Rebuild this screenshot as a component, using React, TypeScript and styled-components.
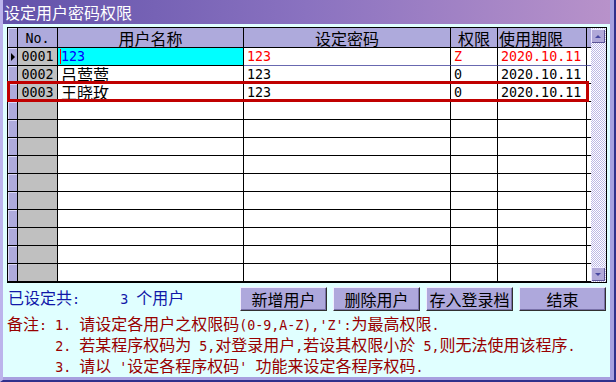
import React from "react";
import styled, { createGlobalStyle } from "styled-components";

const GlobalStyle = createGlobalStyle`
  html, body {
    margin: 0;
    padding: 0;
    background: #e0ffff;
  }
  body {
    font-family: "Noto Sans CJK SC", "Noto Sans", sans-serif;
  }
`;

const Frame = styled.div`
  width: 616px;
  height: 382px;
  box-sizing: border-box;
  border-left: 3px solid #bcb4ec;
  border-right: 2px solid #30308c;
  border-bottom: 2px solid #30308c;
  background: #e0ffff;
`;

const Body = styled.div`
  height: 100%;
  box-sizing: border-box;
  border-right: 4px solid #a8a0e0;
  border-bottom: 3px solid #a8a0e0;
  display: flex;
  flex-direction: column;
`;

const TitleBar = styled.div`
  height: 24px;
  flex: none;
  background: linear-gradient(to right, #6252aa 0%, #8a72c0 50%, #b892ca 100%);
  color: #fff;
  font-size: 16px;
  line-height: 24px;
  padding-left: 1px;
`;

const Grid = styled.div`
  position: relative;
  margin: 3px 3px 0 4px;
  width: 600px;
  height: 256px;
  box-sizing: border-box;
  border: 1px solid #000;
  display: flex;
  flex: none;
`;

const Table = styled.div`
  width: 583px;
  display: flex;
  flex-direction: column;
  background: #fff;
`;

const Row = styled.div<{ $h: number }>`
  display: grid;
  grid-template-columns: 10px 40px 186px 207px 47px 89px 4px;
  height: ${(p) => p.$h}px;
`;

const Cell = styled.div<{ $bg?: string; $color?: string; $center?: boolean; $line?: string }>`
  box-sizing: border-box;
  border-right: 1px solid #000;
  border-bottom: 1px solid ${(p) => p.$line || "#000"};
  background: ${(p) => p.$bg || "#fff"};
  color: ${(p) => p.$color || "#000"};
  display: flex;
  align-items: center;
  justify-content: ${(p) => (p.$center ? "center" : "flex-start")};
  padding-left: ${(p) => (p.$center ? 0 : 3)}px;
  white-space: pre;
  font-size: 16px;
  line-height: 17px;
`;

const HeadCell = styled(Cell)`
  background: #aeaadc;
  padding-top: 1px;
`;

const Indicator = styled(Cell)`
  background: #aeaadc;
  box-shadow: inset 1px 1px 0 #dcd8f8;
  justify-content: center;
  padding-left: 1px;
`;

const Filler = styled(Cell)`
  border-right: none;
`;

const Pointer = styled.span`
  width: 0;
  height: 0;
  border-left: 4px solid #000;
  border-top: 4px solid transparent;
  border-bottom: 4px solid transparent;
`;

const Caret = styled.span`
  display: flex;
  align-items: center;
  height: 15px;
  border-left: 1px solid #ff0000;
  margin-left: -1px;
`;

const Scroll = styled.div`
  width: 15px;
  box-sizing: border-box;
  padding: 1px 0;
  display: flex;
  flex-direction: column;
  justify-content: space-between;
  background: repeating-conic-gradient(#bcb8e6 0 25%, #ffffff 0 50%) 0 0 / 2px 2px;
`;

const ScrollBtn = styled.div`
  width: 14px;
  height: 14px;
  background: #b0a8d8;
  box-shadow: inset 1px 1px 0 #ece8ff, inset -1px -1px 0 #5c5498;
  display: flex;
  align-items: center;
  justify-content: center;
`;

const Arrow = styled.span<{ $up?: boolean }>`
  width: 0;
  height: 0;
  border-left: 3px solid transparent;
  border-right: 3px solid transparent;
  ${(p) => (p.$up ? "border-bottom" : "border-top")}: 3px solid #4848a0;
`;

const Highlight = styled.div`
  position: absolute;
  left: -1px;
  top: 53px;
  width: 582px;
  height: 21px;
  box-sizing: border-box;
  border: 3px solid #c00000;
  pointer-events: none;
`;

const ActionRow = styled.div`
  display: flex;
  align-items: flex-start;
  margin: 4px 4px 0 5px;
  height: 24px;
  flex: none;
`;

const Summary = styled.div`
  color: #1018a8;
  font-size: 16px;
  line-height: 20px;
  white-space: pre;
`;

const Buttons = styled.div`
  display: flex;
  gap: 6px;
  margin-left: auto;
`;

const Button = styled.button`
  width: 87px;
  height: 24px;
  padding: 0;
  box-sizing: border-box;
  background: #aea8dc;
  border: 1px solid;
  border-color: #f0eeff #303030 #303030 #f0eeff;
  box-shadow: inset -1px -1px 0 #7870a8;
  font-family: "Noto Sans CJK SC", sans-serif;
  font-size: 16px;
  line-height: 20px;
  color: #000;
`;

const Notes = styled.div`
  margin: 2px 0 0 4px;
  color: #980000;
  font-size: 16px;
`;

const NoteLine = styled.div`
  height: 21px;
  line-height: 21px;
  white-space: pre;
`;

const Half = styled.span`
  font-family: "DejaVu Sans Mono", "Liberation Mono", monospace;
  font-size: 13.33px;
`;

const Mixed: React.FC<{ text: string }> = ({ text }) => (
  <>
    {text.split(/([\x20-\x7e]+)/).map((part, i) =>
      /^[\x20-\x7e]+$/.test(part) ? <Half key={i}>{part}</Half> : part ? <span key={i}>{part}</span> : null
    )}
  </>
);

interface User {
  no: string;
  name: string;
  pw: string;
  perm: string;
  date: string;
}

const users: User[] = [
  { no: "0001", name: "123", pw: "123", perm: "Z", date: "2020.10.11" },
  { no: "0002", name: "吕莺莺", pw: "123", perm: "0", date: "2020.10.11" },
  { no: "0003", name: "王晓玫", pw: "123", perm: "0", date: "2020.10.11" },
];

const TOTAL_ROWS = 13;

export default function App() {
  const rows: (User | null)[] = [...users];
  while (rows.length < TOTAL_ROWS) rows.push(null);

  return (
    <>
      <GlobalStyle />
      <Frame>
        <Body>
          <TitleBar>设定用户密码权限</TitleBar>
          <Grid>
            <Table>
              <Row $h={20}>
                <Indicator />
                <HeadCell $center>
                  <Mixed text="No." />
                </HeadCell>
                <HeadCell $center>用户名称</HeadCell>
                <HeadCell $center>设定密码</HeadCell>
                <HeadCell $center>权限</HeadCell>
                <HeadCell style={{ paddingLeft: 1 }}>使用期限</HeadCell>
                <Filler $bg="#aeaadc" />
              </Row>
              {rows.map((u, i) => {
                const active = i === 0;
                const line = active ? "#6868b0" : "#000";
                const color = active ? "#ff0000" : "#000";
                return (
                  <Row $h={18} key={i}>
                    <Indicator>{active && <Pointer />}</Indicator>
                    <Cell $bg="#c0c0c0" $center>
                      {u && <Mixed text={u.no} />}
                    </Cell>
                    {active && u ? (
                      <Cell $bg="#00ffff" $color="#0000ff">
                        <Caret>
                          <Mixed text={u.name} />
                        </Caret>
                      </Cell>
                    ) : (
                      <Cell>{u && <Mixed text={u.name} />}</Cell>
                    )}
                    <Cell $color={color} $line={line}>
                      {u && <Mixed text={u.pw} />}
                    </Cell>
                    <Cell $color={color} $line={line}>
                      {u && <Mixed text={u.perm} />}
                    </Cell>
                    <Cell $color={color} $line={line}>
                      {u && <Mixed text={u.date} />}
                    </Cell>
                    <Filler $line={line} />
                  </Row>
                );
              })}
            </Table>
            <Scroll>
              <ScrollBtn>
                <Arrow $up />
              </ScrollBtn>
              <ScrollBtn>
                <Arrow />
              </ScrollBtn>
            </Scroll>
            <Highlight />
          </Grid>
          <ActionRow>
            <Summary>
              <Mixed text="已设定共:     3 个用户" />
            </Summary>
            <Buttons>
              <Button>新增用户</Button>
              <Button>删除用户</Button>
              <Button>存入登录档</Button>
              <Button>结束</Button>
            </Buttons>
          </ActionRow>
          <Notes>
            <NoteLine>
              <Mixed text="备注: 1. 请设定各用户之权限码(0-9,A-Z),'Z':为最高权限." />
            </NoteLine>
            <NoteLine>
              <Mixed text="      2. 若某程序权码为 5,对登录用户,若设其权限小於 5,则无法使用该程序." />
            </NoteLine>
            <NoteLine>
              <Mixed text="      3. 请以 '设定各程序权码' 功能来设定各程序权码." />
            </NoteLine>
          </Notes>
        </Body>
      </Frame>
    </>
  );
}
